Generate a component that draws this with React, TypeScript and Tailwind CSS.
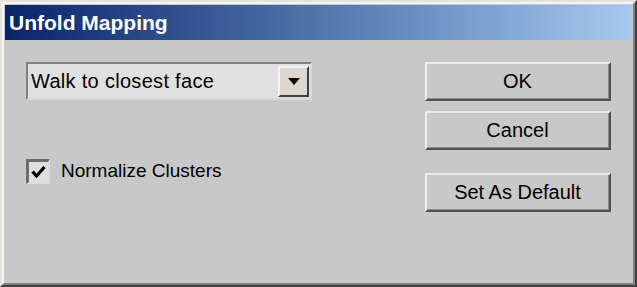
export default function App() {
  const font = { fontFamily: '"Liberation Sans", Arial, sans-serif' };
  return (
    <div className="w-[637px] h-[287px] flex flex-col bg-[#c8c8c8] border-t-[2px] border-l-[2px] border-t-[#e4e2dc] border-l-[#e4e2dc] border-r-[2px] border-b-[2px] border-r-[#404040] border-b-[#404040]" style={font}>
      <div className="flex-1 flex flex-col border-t-[2px] border-l-[2px] border-t-[#f4f4f4] border-l-[#f4f4f4] border-r-[2px] border-b-[2px] border-r-[#808080] border-b-[#808080] px-[1px] pt-[1px]">
        <div className="h-[35px] flex items-center pl-[4px] bg-gradient-to-r from-[#0a246a] to-[#a6caf0] text-white font-bold text-[21px]">
          Unfold Mapping
        </div>
        <div className="flex justify-between pl-[21px] pr-[21px] pt-[22px]">
          <div className="w-[286px] flex flex-col">
            <div className="h-[38px] flex items-center justify-between bg-[#e0e0e0] border-t-[2px] border-l-[2px] border-t-[#808080] border-l-[#808080] border-r-[2px] border-b-[2px] border-r-[#d8d8d8] border-b-[#d8d8d8] pl-[3px] pr-[1px]">
              <span className="text-[20px] text-black tracking-[0.3px]">Walk to closest face</span>
              <div className="w-[31px] h-[31px] flex items-center justify-center bg-[#dcd8d0] border-t-[2px] border-l-[2px] border-t-[#f4f4f4] border-l-[#f4f4f4] border-r-[2px] border-b-[2px] border-r-[#404040] border-b-[#404040]">
                <svg width="12" height="7" viewBox="0 0 12 7">
                  <path d="M0 0h12L6 7z" fill="#000" />
                </svg>
              </div>
            </div>
            <label className="mt-[57px] flex items-center gap-[11px]">
              <span className="w-[24px] h-[25px] flex items-center justify-center bg-[#e0e0e0] border-t-[3px] border-l-[3px] border-t-[#6c6c6c] border-l-[#6c6c6c] border-r-[2px] border-b-[2px] border-r-[#dcdcdc] border-b-[#dcdcdc]">
                <svg width="15" height="13" viewBox="0 0 15 13">
                  <path d="M1.5 6.5l4 4.5L13.5 2" stroke="#000" strokeWidth="3.2" fill="none" />
                </svg>
              </span>
              <span className="text-[19px] text-black">Normalize Clusters</span>
            </label>
          </div>
          <div className="w-[186px] flex flex-col">
            <Btn label="OK" />
            <div className="mt-[10px]">
              <Btn label="Cancel" />
            </div>
            <div className="mt-[23px]">
              <Btn label="Set As Default" />
            </div>
          </div>
        </div>
      </div>
    </div>
  );
}

function Btn({ label }: { label: string }) {
  return (
    <div className="h-[39px] border-t-[2px] border-l-[2px] border-t-[#ececec] border-l-[#ececec] border-r-[2px] border-b-[2px] border-r-[#505050] border-b-[#505050]">
      <div className="h-full flex items-center justify-center border-b-[1px] border-r-[1px] border-[#8c8c8c] text-[20px] text-black">
        {label}
      </div>
    </div>
  );
}
